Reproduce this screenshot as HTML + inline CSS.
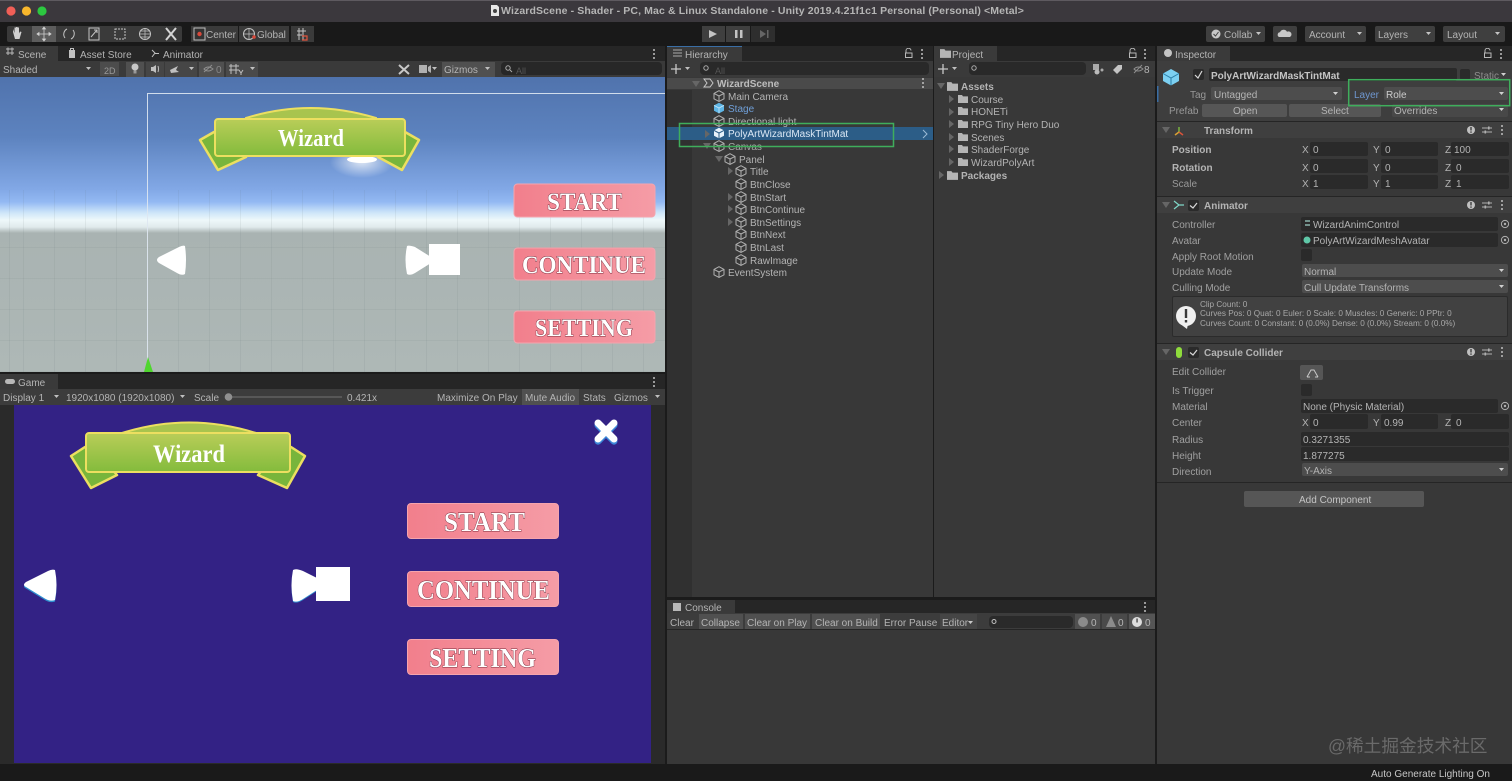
<!DOCTYPE html>
<html><head><meta charset="utf-8"><title>Unity</title>
<style>
html,body{margin:0;padding:0;width:1512px;height:781px;overflow:hidden;background:#383838}
body{position:relative;font-family:"Liberation Sans","Noto Sans CJK SC",sans-serif;font-size:10px;color:#b4b4b4;filter:blur(.3px)}
.b{position:absolute}
.t{position:absolute;line-height:12px;white-space:nowrap;margin-top:4px}
.f{position:absolute;background:#2a2a2a;border-radius:2px}
.d{position:absolute;background:#4d4d4d;border-radius:2px}
.h{position:absolute;background:#3f3f3f;left:1157px;width:355px;height:16px;border-top:1px solid #252525}
.bold{font-weight:bold}
svg{position:absolute;left:0;top:0}
</style></head>
<body>
<!-- title bar -->
<div class="b" style="left:0;top:0;width:1512px;height:22px;background:#3b383d;border-top:1px solid #5e5a60;box-sizing:border-box"></div>
<div class="b" style="left:0;top:22px;width:1512px;height:24px;background:#191919"></div>
<div class="t bold" style="left:501px;top:1px;font-size:10.5px;color:#b5b5b5;letter-spacing:.12px">WizardScene - Shader - PC, Mac &amp; Linux Standalone - Unity 2019.4.21f1c1 Personal (Personal) &lt;Metal&gt;</div>

<!-- toolbar buttons -->
<div class="b" style="left:7px;top:26px;width:175px;height:16px;background:#3a3a3a;border-radius:2px"></div>
<div class="b" style="left:32px;top:26px;width:24px;height:16px;background:#5c5c5c"></div>
<div class="b" style="left:191px;top:26px;width:47px;height:16px;background:#3a3a3a"></div>
<div class="b" style="left:239px;top:26px;width:50px;height:16px;background:#3a3a3a"></div>
<div class="b" style="left:291px;top:26px;width:23px;height:16px;background:#3a3a3a"></div>
<div class="t" style="left:206px;top:26px">Center</div>
<div class="t" style="left:257px;top:26px">Global</div>
<div class="b" style="left:702px;top:26px;width:23px;height:16px;background:#3f3f3f"></div>
<div class="b" style="left:726px;top:26px;width:24px;height:16px;background:#3f3f3f"></div>
<div class="b" style="left:751px;top:26px;width:24px;height:16px;background:#2e2e2e"></div>
<div class="b" style="left:1206px;top:26px;width:59px;height:16px;background:#3f3f3f;border-radius:2px"></div>
<div class="b" style="left:1273px;top:26px;width:24px;height:16px;background:#3f3f3f;border-radius:2px"></div>
<div class="b" style="left:1305px;top:26px;width:61px;height:16px;background:#3f3f3f;border-radius:2px"></div>
<div class="b" style="left:1375px;top:26px;width:60px;height:16px;background:#3f3f3f;border-radius:2px"></div>
<div class="b" style="left:1443px;top:26px;width:62px;height:16px;background:#3f3f3f;border-radius:2px"></div>
<div class="t" style="left:1224px;top:26px">Collab</div>
<div class="t" style="left:1309px;top:26px">Account</div>
<div class="t" style="left:1378px;top:26px">Layers</div>
<div class="t" style="left:1447px;top:26px">Layout</div>

<!-- tab strips -->
<div class="b" style="left:0;top:46px;width:665px;height:15px;background:#262626"></div>
<div class="b" style="left:0;top:46px;width:58px;height:15px;background:#3a3a3a"></div>
<div class="b" style="left:0;top:61px;width:665px;height:16px;background:#3a3a3a"></div>
<div class="t" style="left:18px;top:46px">Scene</div>
<div class="t" style="left:80px;top:46px">Asset Store</div>
<div class="t" style="left:163px;top:46px">Animator</div>
<div class="t" style="left:3px;top:61px">Shaded</div>
<div class="b" style="left:100px;top:62px;width:19px;height:14px;background:#4c4c4c"></div>
<div class="t" style="left:104px;top:61px;font-size:9px;color:#999">2D</div>
<div class="b" style="left:126px;top:62px;width:18px;height:15px;background:#505050"></div>
<div class="b" style="left:146px;top:62px;width:18px;height:15px;background:#464646"></div>
<div class="b" style="left:165px;top:62px;width:32px;height:15px;background:#464646"></div>
<div class="b" style="left:199px;top:62px;width:25px;height:15px;background:#505050"></div>
<div class="b" style="left:226px;top:62px;width:32px;height:15px;background:#4a4a4a"></div>
<div class="t" style="left:216px;top:61px;color:#888">0</div>
<div class="b" style="left:442px;top:62px;width:53px;height:15px;background:#505050"></div>
<div class="t" style="left:444px;top:61px">Gizmos</div>
<div class="f" style="left:501px;top:62px;width:161px;height:13px;background:#272727;border-radius:4px"></div>
<div class="t" style="left:516px;top:61px;font-size:9px;color:#555">All</div>

<!-- scene view -->
<div class="b" style="left:0;top:77px;width:665px;height:295px;background:linear-gradient(#5073ad 0,#5d83bf 60px,#82a8e6 112px,#93b9f3 125px,#cfe6f9 136px,#eef8fa 143px,#e0eaec 150px,#a9b3b2 156px,#aeb8b6 295px)"></div>
<div class="b" style="left:0;top:190px;width:665px;height:182px;background:repeating-linear-gradient(90deg,rgba(90,105,105,.09) 0,rgba(90,105,105,.09) 1px,transparent 1px,transparent 31px);background-position:23px 0"></div>
<div class="b" style="left:0;top:240px;width:665px;height:132px;background:repeating-linear-gradient(0deg,rgba(90,105,105,.08) 0,rgba(90,105,105,.08) 1px,transparent 1px,transparent 31px)"></div>
<div class="b" style="left:665px;top:46px;width:2px;height:718px;background:#1b1b1b"></div>
<div class="b" style="left:0;top:372px;width:665px;height:2px;background:#1b1b1b"></div>

<!-- game panel -->
<div class="b" style="left:0;top:374px;width:665px;height:15px;background:#262626"></div>
<div class="b" style="left:0;top:374px;width:58px;height:15px;background:#3a3a3a"></div>
<div class="b" style="left:0;top:389px;width:665px;height:16px;background:#3c3c3c"></div>
<div class="t" style="left:18px;top:374px">Game</div>
<div class="t" style="left:3px;top:389px">Display 1</div>
<div class="t" style="left:66px;top:389px">1920x1080 (1920x1080)</div>
<div class="t" style="left:194px;top:389px">Scale</div>
<div class="t" style="left:347px;top:389px">0.421x</div>
<div class="t" style="left:437px;top:389px">Maximize On Play</div>
<div class="b" style="left:522px;top:389px;width:57px;height:16px;background:#505050"></div>
<div class="t" style="left:525px;top:389px">Mute Audio</div>
<div class="t" style="left:583px;top:389px">Stats</div>
<div class="t" style="left:614px;top:389px">Gizmos</div>
<div class="b" style="left:0;top:405px;width:665px;height:359px;background:#2a2a2a"></div>
<div class="b" style="left:14px;top:405px;width:637px;height:358px;background:#332285"></div>

<!-- hierarchy -->
<div class="b" style="left:667px;top:46px;width:266px;height:15px;background:#262626"></div>
<div class="b" style="left:667px;top:46px;width:75px;height:15px;background:#3a3a3a;border-top:1px solid #3a6ea5;box-sizing:border-box"></div>
<div class="b" style="left:667px;top:61px;width:266px;height:16px;background:#3a3a3a"></div>
<div class="f" style="left:700px;top:62px;width:229px;height:13px;background:#292929;border-radius:4px"></div>
<div class="t" style="left:715px;top:61px;font-size:9px;color:#555">All</div>
<div class="t" style="left:685px;top:46px">Hierarchy</div>
<div class="b" style="left:667px;top:77px;width:266px;height:520px;background:#383838"></div>
<div class="b" style="left:667px;top:90px;width:25px;height:507px;background:#303030"></div>
<div class="b" style="left:667px;top:78px;width:266px;height:11px;background:#4a4a4a"></div>
<div class="t bold" style="left:717px;top:75px;color:#bdbdbd">WizardScene</div>
<div class="t" style="left:728px;top:88px">Main Camera</div>
<div class="t" style="left:728px;top:100px;color:#6f9fd8">Stage</div>
<div class="t" style="left:728px;top:113px">Directional light</div>
<div class="b" style="left:667px;top:127px;width:266px;height:13px;background:#2c5d87"></div>
<div class="t" style="left:728px;top:125px;color:#dbe8f5">PolyArtWizardMaskTintMat</div>
<div class="t" style="left:728px;top:138px;color:#a8a8a8">Canvas</div>
<div class="t" style="left:739px;top:151px">Panel</div>
<div class="t" style="left:750px;top:163px">Title</div>
<div class="t" style="left:750px;top:176px">BtnClose</div>
<div class="t" style="left:750px;top:189px">BtnStart</div>
<div class="t" style="left:750px;top:201px">BtnContinue</div>
<div class="t" style="left:750px;top:214px">BtnSettings</div>
<div class="t" style="left:750px;top:226px">BtnNext</div>
<div class="t" style="left:750px;top:239px">BtnLast</div>
<div class="t" style="left:750px;top:252px">RawImage</div>
<div class="t" style="left:728px;top:264px">EventSystem</div>

<!-- project -->
<div class="b" style="left:933px;top:46px;width:1px;height:551px;background:#1b1b1b"></div>
<div class="b" style="left:934px;top:46px;width:221px;height:15px;background:#262626"></div>
<div class="b" style="left:934px;top:46px;width:63px;height:15px;background:#3a3a3a"></div>
<div class="b" style="left:934px;top:61px;width:221px;height:16px;background:#3a3a3a"></div>
<div class="f" style="left:969px;top:62px;width:117px;height:13px;background:#292929;border-radius:4px"></div>
<div class="t" style="left:952px;top:46px">Project</div>
<div class="t" style="left:1144px;top:61px">8</div>
<div class="t bold" style="left:961px;top:78px">Assets</div>
<div class="t" style="left:971px;top:91px">Course</div>
<div class="t" style="left:971px;top:103px">HONETi</div>
<div class="t" style="left:971px;top:116px">RPG Tiny Hero Duo</div>
<div class="t" style="left:971px;top:129px">Scenes</div>
<div class="t" style="left:971px;top:141px">ShaderForge</div>
<div class="t" style="left:971px;top:154px">WizardPolyArt</div>
<div class="t bold" style="left:961px;top:167px">Packages</div>

<!-- console -->
<div class="b" style="left:667px;top:597px;width:488px;height:3px;background:#1b1b1b"></div>
<div class="b" style="left:667px;top:600px;width:488px;height:13px;background:#262626"></div>
<div class="b" style="left:667px;top:600px;width:68px;height:13px;background:#3a3a3a"></div>
<div class="b" style="left:667px;top:613px;width:488px;height:17px;background:#3c3c3c;border-bottom:1px solid #252525;box-sizing:border-box"></div>
<div class="b" style="left:699px;top:614px;width:44px;height:15px;background:#505050"></div>
<div class="b" style="left:745px;top:614px;width:65px;height:15px;background:#505050"></div>
<div class="b" style="left:812px;top:614px;width:68px;height:15px;background:#505050"></div>
<div class="b" style="left:940px;top:614px;width:37px;height:15px;background:#454545"></div>
<div class="f" style="left:989px;top:616px;width:84px;height:12px;border-radius:4px"></div>
<div class="b" style="left:1075px;top:614px;width:25px;height:15px;background:#505050"></div>
<div class="b" style="left:1102px;top:614px;width:25px;height:15px;background:#4a4a4a"></div>
<div class="b" style="left:1129px;top:614px;width:26px;height:15px;background:#555"></div>
<div class="t" style="left:685px;top:599px">Console</div>
<div class="t" style="left:670px;top:614px">Clear</div>
<div class="t" style="left:701px;top:614px">Collapse</div>
<div class="t" style="left:747px;top:614px">Clear on Play</div>
<div class="t" style="left:815px;top:614px">Clear on Build</div>
<div class="t" style="left:884px;top:614px">Error Pause</div>
<div class="t" style="left:942px;top:614px">Editor</div>
<div class="t" style="left:1091px;top:614px">0</div>
<div class="t" style="left:1118px;top:614px">0</div>
<div class="t" style="left:1145px;top:614px">0</div>

<!-- inspector -->
<div class="b" style="left:1155px;top:46px;width:2px;height:718px;background:#1b1b1b"></div>
<div class="b" style="left:1157px;top:46px;width:355px;height:15px;background:#262626"></div>
<div class="b" style="left:1157px;top:46px;width:73px;height:15px;background:#3a3a3a"></div>
<div class="t" style="left:1175px;top:46px">Inspector</div>
<div class="b" style="left:1157px;top:61px;width:355px;height:60px;background:#3e3e3e"></div>
<div class="f" style="left:1193px;top:69px;width:11px;height:11px"></div>
<div class="f" style="left:1209px;top:68px;width:248px;height:13px"></div>
<div class="t bold" style="left:1211px;top:67px;color:#c4c4c4">PolyArtWizardMaskTintMat</div>
<div class="f" style="left:1460px;top:69px;width:10px;height:11px"></div>
<div class="t" style="left:1474px;top:67px;color:#8d8d8d">Static</div>
<div class="t" style="left:1190px;top:86px;color:#999">Tag</div>
<div class="d" style="left:1211px;top:87px;width:131px;height:13px"></div>
<div class="t" style="left:1214px;top:86px">Untagged</div>
<div class="t" style="left:1354px;top:86px;color:#6f97d0">Layer</div>
<div class="d" style="left:1384px;top:87px;width:124px;height:13px"></div>
<div class="t" style="left:1386px;top:86px;color:#ccc">Role</div>
<div class="t" style="left:1169px;top:102px;color:#999">Prefab</div>
<div class="d" style="left:1202px;top:104px;width:85px;height:13px;background:#565656"></div>
<div class="d" style="left:1289px;top:104px;width:92px;height:13px;background:#565656"></div>
<div class="d" style="left:1392px;top:104px;width:116px;height:13px;background:#484848"></div>
<div class="t" style="left:1233px;top:102px">Open</div>
<div class="t" style="left:1321px;top:102px">Select</div>
<div class="t" style="left:1394px;top:102px">Overrides</div>

<div class="h" style="top:121px"></div>
<div class="t bold" style="left:1204px;top:122px">Transform</div>
<div class="t bold" style="left:1172px;top:141px">Position</div>
<div class="t bold" style="left:1172px;top:159px">Rotation</div>
<div class="t" style="left:1172px;top:175px;color:#999">Scale</div>
<div class="f" style="left:1310px;top:142px;width:58px;height:14px"></div>
<div class="f" style="left:1381px;top:142px;width:57px;height:14px"></div>
<div class="f" style="left:1451px;top:142px;width:58px;height:14px"></div>
<div class="f" style="left:1310px;top:159px;width:58px;height:14px"></div>
<div class="f" style="left:1381px;top:159px;width:57px;height:14px"></div>
<div class="f" style="left:1451px;top:159px;width:58px;height:14px"></div>
<div class="f" style="left:1310px;top:175px;width:58px;height:14px"></div>
<div class="f" style="left:1381px;top:175px;width:57px;height:14px"></div>
<div class="f" style="left:1451px;top:175px;width:58px;height:14px"></div>
<div class="t" style="left:1302px;top:141px">X</div><div class="t" style="left:1313px;top:141px">0</div>
<div class="t" style="left:1373px;top:141px">Y</div><div class="t" style="left:1385px;top:141px">0</div>
<div class="t" style="left:1445px;top:141px">Z</div><div class="t" style="left:1454px;top:141px">100</div>
<div class="t" style="left:1302px;top:159px">X</div><div class="t" style="left:1313px;top:159px">0</div>
<div class="t" style="left:1373px;top:159px">Y</div><div class="t" style="left:1385px;top:159px">0</div>
<div class="t" style="left:1445px;top:159px">Z</div><div class="t" style="left:1456px;top:159px">0</div>
<div class="t" style="left:1302px;top:175px">X</div><div class="t" style="left:1313px;top:175px">1</div>
<div class="t" style="left:1373px;top:175px">Y</div><div class="t" style="left:1385px;top:175px">1</div>
<div class="t" style="left:1445px;top:175px">Z</div><div class="t" style="left:1456px;top:175px">1</div>

<div class="h" style="top:196px"></div>
<div class="f" style="left:1188px;top:200px;width:11px;height:11px"></div>
<div class="t bold" style="left:1204px;top:197px">Animator</div>
<div class="t" style="left:1172px;top:216px;color:#a0a0a0">Controller</div>
<div class="t" style="left:1172px;top:232px;color:#a0a0a0">Avatar</div>
<div class="t" style="left:1172px;top:248px;color:#a0a0a0">Apply Root Motion</div>
<div class="t" style="left:1172px;top:263px;color:#a0a0a0">Update Mode</div>
<div class="t" style="left:1172px;top:279px;color:#a0a0a0">Culling Mode</div>
<div class="f" style="left:1301px;top:217px;width:197px;height:14px"></div>
<div class="f" style="left:1301px;top:233px;width:197px;height:14px"></div>
<div class="t" style="left:1313px;top:216px">WizardAnimControl</div>
<div class="t" style="left:1313px;top:232px">PolyArtWizardMeshAvatar</div>
<div class="f" style="left:1301px;top:249px;width:11px;height:12px"></div>
<div class="d" style="left:1302px;top:264px;width:206px;height:13px"></div>
<div class="d" style="left:1302px;top:280px;width:206px;height:13px"></div>
<div class="t" style="left:1304px;top:263px">Normal</div>
<div class="t" style="left:1304px;top:279px">Cull Update Transforms</div>
<div class="b" style="left:1172px;top:296px;width:336px;height:41px;background:#414141;border:1px solid #2b2b2b;box-sizing:border-box;border-radius:2px"></div>
<div class="t" style="left:1200px;top:295px;font-size:8.2px;color:#a8a8a8">Clip Count: 0</div>
<div class="t" style="left:1200px;top:304px;font-size:8.2px;color:#a8a8a8">Curves Pos: 0 Quat: 0 Euler: 0 Scale: 0 Muscles: 0 Generic: 0 PPtr: 0</div>
<div class="t" style="left:1200px;top:314px;font-size:8.2px;color:#a8a8a8">Curves Count: 0 Constant: 0 (0.0%) Dense: 0 (0.0%) Stream: 0 (0.0%)</div>

<div class="h" style="top:343px"></div>
<div class="f" style="left:1188px;top:347px;width:11px;height:11px"></div>
<div class="t bold" style="left:1204px;top:344px">Capsule Collider</div>
<div class="t" style="left:1172px;top:363px;color:#a0a0a0">Edit Collider</div>
<div class="d" style="left:1300px;top:365px;width:23px;height:15px;background:#565656"></div>
<div class="t" style="left:1172px;top:382px;color:#a0a0a0">Is Trigger</div>
<div class="f" style="left:1301px;top:384px;width:11px;height:12px"></div>
<div class="t" style="left:1172px;top:398px;color:#a0a0a0">Material</div>
<div class="f" style="left:1301px;top:399px;width:197px;height:14px"></div>
<div class="t" style="left:1303px;top:398px">None (Physic Material)</div>
<div class="t" style="left:1172px;top:414px;color:#a0a0a0">Center</div>
<div class="f" style="left:1310px;top:414px;width:58px;height:15px"></div>
<div class="f" style="left:1381px;top:414px;width:57px;height:15px"></div>
<div class="f" style="left:1451px;top:414px;width:58px;height:15px"></div>
<div class="t" style="left:1302px;top:414px">X</div><div class="t" style="left:1313px;top:414px">0</div>
<div class="t" style="left:1373px;top:414px">Y</div><div class="t" style="left:1384px;top:414px">0.99</div>
<div class="t" style="left:1445px;top:414px">Z</div><div class="t" style="left:1456px;top:414px">0</div>
<div class="t" style="left:1172px;top:431px;color:#a0a0a0">Radius</div>
<div class="f" style="left:1301px;top:432px;width:208px;height:14px"></div>
<div class="t" style="left:1303px;top:431px">0.3271355</div>
<div class="t" style="left:1172px;top:447px;color:#a0a0a0">Height</div>
<div class="f" style="left:1301px;top:447px;width:208px;height:14px"></div>
<div class="t" style="left:1303px;top:447px">1.877275</div>
<div class="t" style="left:1172px;top:463px;color:#a0a0a0">Direction</div>
<div class="d" style="left:1302px;top:463px;width:206px;height:13px"></div>
<div class="t" style="left:1304px;top:462px">Y-Axis</div>
<div class="b" style="left:1157px;top:482px;width:355px;height:1px;background:#252525"></div>
<div class="d" style="left:1244px;top:491px;width:180px;height:16px;background:#565656"></div>
<div class="t" style="left:1299px;top:491px;color:#c4c4c4">Add Component</div>

<!-- status -->
<div class="b" style="left:0;top:764px;width:1512px;height:17px;background:#1a1a1a"></div>
<div class="t" style="left:1371px;top:765px;color:#c8c8c8">Auto Generate Lighting On</div>
<div class="t" style="left:1328px;top:731px;font-size:17.7px;line-height:23px;color:#6a6a6a">@稀土掘金技术社区</div>

<!-- overlay: graphics and icons -->
<svg width="1512" height="781" viewBox="0 0 1512 781">
<defs>
<symbol id="c" viewBox="0 0 12 12"><path d="M6 .7 11 3.4V8.8L6 11.4 1 8.8V3.4ZM1 3.4 6 6 11 3.4M6 6V11.4" fill="none" stroke="#b0b0b0" stroke-width="1"/></symbol>
<symbol id="w" viewBox="0 0 12 12"><path d="M6 .7 11 3.4V8.8L6 11.4 1 8.8V3.4Z" fill="#e8f2fa"/><path d="M1 3.4 6 6 11 3.4M6 6V11.4" fill="none" stroke="#2c5d87"/></symbol>
<symbol id="fo" viewBox="0 0 10 10"><path d="M0 1H4L5 2.4H10V9H0Z" fill="#b5b5b5"/></symbol>
<symbol id="ke" viewBox="0 0 4 12"><circle cx="2" cy="2" r="1" fill="#c0c0c0"/><circle cx="2" cy="6" r="1" fill="#c0c0c0"/><circle cx="2" cy="10" r="1" fill="#c0c0c0"/></symbol>
<symbol id="lk" viewBox="0 0 10 10"><path d="M2 5V3A2.5 2.5 0 0 1 7 2.5M1.5 5H8V9.5H1.5Z" fill="none" stroke="#b8b8b8"/></symbol>
<symbol id="tg" viewBox="0 0 12 12"><circle cx="6" cy="6" r="3.6" fill="none" stroke="#b0b0b0"/><circle cx="6" cy="6" r="1.2" fill="#b0b0b0"/></symbol>
<symbol id="hp" viewBox="0 0 12 12"><circle cx="6" cy="6" r="4" fill="#c0c0c0"/><rect x="5.3" y="3" width="1.4" height="3.5" fill="#3f3f3f"/><rect x="5.3" y="7.4" width="1.4" height="1.4" fill="#3f3f3f"/></symbol>
<symbol id="sl" viewBox="0 0 12 12"><path d="M1 4H11M1 8H11" stroke="#b0b0b0"/><rect x="7" y="2.5" width="1.6" height="3" fill="#b0b0b0"/><rect x="3.5" y="6.5" width="1.6" height="3" fill="#b0b0b0"/></symbol>
<linearGradient id="g" x1="0" y1="0" x2="0" y2="1"><stop offset="0" stop-color="#b9cd58"/><stop offset="1" stop-color="#83bb3c"/></linearGradient>
<linearGradient id="p" x1="0" y1="0" x2="1" y2="0"><stop offset="0" stop-color="#f27f8c"/><stop offset="1" stop-color="#f59ca6"/></linearGradient>
<radialGradient id="gl"><stop offset="0" stop-color="#fff" stop-opacity=".75"/><stop offset="1" stop-color="#fff" stop-opacity="0"/></radialGradient>
</defs>

<!-- traffic lights -->
<circle cx="11" cy="11" r="4.6" fill="#f15f57"/><circle cx="26.5" cy="11" r="4.6" fill="#f8b62c"/><circle cx="42" cy="11" r="4.6" fill="#2cc840"/>
<path d="M491 5H497L499 7V16H491Z" fill="#e8e8e8"/><circle cx="495" cy="11" r="2" fill="#444"/>

<!-- tool icons -->
<path d="M15 39 13 32V29L14.5 33V27.5H16V33V27H17.5V33V27.500H19V33.500L20 31.500 21.500 32 19.500 39Z" fill="#d0d0d0"/>
<path d="M44 28V40M38 34H50M44 27 42.500 29H45.500ZM44 41 42.500 39H45.500ZM37 34 39 32.500V35.500ZM51 34 49 32.500V35.500Z" stroke="#d0d0d0" fill="#d0d0d0" stroke-width=".8"/>
<path d="M67 29A6 6 0 0 0 65 38M71 39A6 6 0 0 0 73 30" fill="none" stroke="#c4c4c4"/>
<rect x="89" y="28" width="10" height="12" fill="none" stroke="#c4c4c4"/><path d="M91 37 97 30M94 30H97V33" fill="none" stroke="#c4c4c4"/>
<rect x="115" y="29" width="10" height="10" fill="none" stroke="#c4c4c4" stroke-dasharray="2 1"/>
<circle cx="145" cy="34" r="5.500" fill="none" stroke="#c4c4c4"/><path d="M139.500 34H150.500M145 28.500V39.500M141 31H149M141 37H149" stroke="#c4c4c4" stroke-width=".7"/>
<path d="M166 28 176 40M176 28 166 40" stroke="#d5d5d5" stroke-width="2"/>
<rect x="194" y="28" width="11" height="12" fill="#333" stroke="#bdbdbd"/><circle cx="199.500" cy="34" r="2.200" fill="#d8483a"/>
<circle cx="249" cy="34" r="5.500" fill="none" stroke="#c4c4c4"/><path d="M243.500 34H254.500M249 28.500V39.500" stroke="#c4c4c4" stroke-width=".7"/><circle cx="254" cy="37" r="1.800" fill="#d8483a"/>
<path d="M299 28V40M303 28V40M297 31H306M297 35H302" stroke="#c4c4c4" stroke-width="1"/><path d="M302 36H307V40H302" fill="none" stroke="#e0553f" stroke-width="1.200"/>
<!-- play -->
<path d="M709 30 717 34 709 38Z" fill="#c4c4c4"/>
<rect x="735" y="30" width="2.500" height="8" fill="#c4c4c4"/><rect x="740" y="30" width="2.500" height="8" fill="#c4c4c4"/>
<path d="M760 30 766 34 760 38Z M767 30H768.500V38H767Z" fill="#666"/>
<!-- collab etc -->
<circle cx="1216" cy="34" r="4.500" fill="#c8c8c8"/><path d="M1213.500 34 1215.500 36 1218.500 32" fill="none" stroke="#444"/>
<path d="M1256 32H1261L1258.500 35Z M1357 32H1362L1359.500 35Z M1426 32H1431L1428.500 35Z M1495 32H1500L1497.500 35Z" fill="#c4c4c4"/>
<path d="M1279 37A2.500 2.500 0 0 1 1280 32.300A3.800 3.800 0 0 1 1287 31.800A2.800 2.800 0 0 1 1290 37Z" fill="#c8c8c8"/>

<!-- scene toolbar -->
<path d="M6 49H14M6 53H14M8 47.500V55M12 47.500V55" stroke="#b8b8b8"/>
<path d="M69 50H75V58H69Z" fill="#c0c0c0"/><path d="M70.500 50V48.500H73.500V50" fill="none" stroke="#c0c0c0"/>
<path d="M152 50 155 53 152 57M155 53.500H159" fill="none" stroke="#c0c0c0"/>
<use href="#ke" x="652" y="48" width="4" height="12"/>
<path d="M86 67H91L88.500 70Z M189 67H194L191.500 70Z M250 67H255L252.500 70Z M432 67H437L434.500 70Z M485 67H490L487.500 70Z" fill="#c0c0c0"/>
<circle cx="135" cy="67" r="3.500" fill="#c8c8c8"/><rect x="133.500" y="70.500" width="3" height="3" fill="#999"/>
<path d="M151 67V71H153L156 73V65L153 67Z" fill="#c0c0c0"/><path d="M158 66Q159 69 158 72" fill="none" stroke="#c0c0c0"/>
<path d="M170 70 178 66 176 70 179 72 171 73Z" fill="#c0c0c0"/>
<path d="M204 72 212 65M204 69Q208 65 213 69Q208 73 204 69Z" fill="none" stroke="#8f8f8f"/>
<path d="M231 64V74M236 64V74M229 66H239M229 70H239" stroke="#c0c0c0"/><path d="M239 70 241 73 243 70M241 73V75" fill="none" stroke="#c0c0c0"/>
<path d="M399 65 409 74M409 65 399 74" stroke="#c8c8c8" stroke-width="2"/>
<rect x="419" y="65" width="8" height="8" fill="#b0b0b0"/><path d="M428 67 431 65V73L428 71Z" fill="#b0b0b0"/>
<circle cx="508" cy="68" r="2.200" fill="none" stroke="#aaa"/><path d="M510 70 512 72" stroke="#aaa"/>

<!-- scene content -->
<path d="M147.500 372V93.500H665" fill="none" stroke="#dfe8f2" stroke-width="1" opacity=".9"/>
<ellipse cx="362" cy="162" rx="32" ry="16" fill="url(#gl)"/><ellipse cx="362" cy="159.500" rx="15" ry="3.500" fill="#fff"/>
<path d="M246 118Q310 98 376 118V130H246Z" fill="#a8c44e" stroke="#ecdf60" stroke-width="2"/>
<path d="M214 132 200 140 218 170 246 157 230 140Z" fill="#78b53b" stroke="#ecdf60" stroke-width="2.500" stroke-linejoin="round"/>
<path d="M405 132 419 140 402 170 378 157 390 140Z" fill="#78b53b" stroke="#ecdf60" stroke-width="2.500" stroke-linejoin="round"/>
<rect x="215" y="119" width="190" height="37" rx="3" fill="url(#g)" stroke="#ecdf60" stroke-width="2"/>
<text x="278" y="146" font-family="Liberation Serif" font-weight="bold" font-size="24" fill="#fff" textLength="66" lengthAdjust="spacingAndGlyphs">Wizard</text>

<g font-family="Liberation Serif" font-weight="bold" fill="#fff" stroke="#7a2c3c" stroke-width=".9" paint-order="stroke">
<rect x="514.500" y="184.500" width="140" height="32" rx="3" fill="url(#p)" stroke="#f5a4ad" stroke-width="2"/>
<rect x="514.500" y="248.500" width="140" height="31" rx="3" fill="url(#p)" stroke="#f5a4ad" stroke-width="2"/>
<rect x="514.500" y="311.500" width="140" height="31" rx="3" fill="url(#p)" stroke="#f5a4ad" stroke-width="2"/>
<text x="547" y="210" font-size="25" textLength="75" lengthAdjust="spacingAndGlyphs">START</text>
<text x="522" y="273" font-size="25" textLength="124" lengthAdjust="spacingAndGlyphs">CONTINUE</text>
<text x="535" y="336" font-size="25" textLength="98" lengthAdjust="spacingAndGlyphs">SETTING</text>
</g>
<path d="M185 246Q187 260 185 274Q182 276 177 273L159 263Q155 260 159 257L179 247Q183 245 185 246Z" fill="#fff"/>
<path d="M407 246Q404 260 407 274Q410 276 415 273L431 263V257L415 247Q409 245 407 246Z" fill="#fff"/>
<rect x="429" y="244" width="31" height="31" fill="#fff"/>
<path d="M148 357 153 372H144Z" fill="#4fd62e"/>

<!-- game tab -->
<rect x="5" y="379" width="10" height="5" rx="2.500" fill="#b8b8b8"/>
<use href="#ke" x="652" y="376" width="4" height="12"/>
<path d="M54 395H59L56.500 398Z M180 395H185L182.500 398Z M655 395H660L657.500 398Z" fill="#c0c0c0"/>
<path d="M228 397H342" stroke="#606060" stroke-width="1.500"/><circle cx="228.500" cy="397" r="3.800" fill="#8f8f8f"/>

<!-- game content -->
<path d="M122 433Q189 412 256 433V445H122Z" fill="#a8c44e" stroke="#ecdf60" stroke-width="2"/>
<path d="M85 447 71 456 91 488 117 475 100 455Z" fill="#78b53b" stroke="#ecdf60" stroke-width="2.500" stroke-linejoin="round"/>
<path d="M291 447 305 456 287 488 258 475 275 455Z" fill="#78b53b" stroke="#ecdf60" stroke-width="2.500" stroke-linejoin="round"/>
<rect x="86" y="433" width="204" height="39" rx="3" fill="url(#g)" stroke="#ecdf60" stroke-width="2"/>
<text x="153" y="462" font-family="Liberation Serif" font-weight="bold" font-size="25" fill="#fff" textLength="72" lengthAdjust="spacingAndGlyphs">Wizard</text>
<path d="M598 424 614 440M614 424 598 440" stroke="#3c87d8" stroke-width="7" stroke-linecap="round" transform="translate(0 1.200)"/>
<path d="M598 423 614 439M614 423 598 439" stroke="#fff" stroke-width="7" stroke-linecap="round"/>
<g font-family="Liberation Serif" font-weight="bold" fill="#fff" stroke="#7a2c3c" stroke-width=".9" paint-order="stroke">
<rect x="408" y="504" width="150" height="34" rx="3" fill="url(#p)" stroke="#f5a4ad" stroke-width="2"/>
<rect x="408" y="572" width="150" height="34" rx="3" fill="url(#p)" stroke="#f5a4ad" stroke-width="2"/>
<rect x="408" y="640" width="150" height="34" rx="3" fill="url(#p)" stroke="#f5a4ad" stroke-width="2"/>
<text x="444" y="531" font-size="27" textLength="81" lengthAdjust="spacingAndGlyphs">START</text>
<text x="417" y="599" font-size="27" textLength="133" lengthAdjust="spacingAndGlyphs">CONTINUE</text>
<text x="429" y="667" font-size="27" textLength="107" lengthAdjust="spacingAndGlyphs">SETTING</text>
</g>
<path d="M55 570Q58 585 55 600Q50 602 44 598L26 587Q22 585 26 582L48 571Q52 569 55 570Z" fill="#2f8fd0" transform="translate(0 1.500)"/>
<path d="M55 570Q58 585 55 600Q50 602 44 598L26 587Q22 585 26 582L48 571Q52 569 55 570Z" fill="#fff"/>
<path d="M293 570Q290 585 293 601Q297 603 303 599L317 590V578L303 571Q296 568 293 570Z" fill="#2f8fd0" transform="translate(0 1)"/>
<path d="M293 570Q290 585 293 601Q297 603 303 599L317 590V578L303 571Q296 568 293 570Z" fill="#fff"/>
<rect x="316" y="567" width="34" height="34" fill="#fff"/>

<!-- hierarchy icons -->
<path d="M676 64V74M671 69H681" stroke="#c8c8c8" stroke-width="1.300"/><path d="M685 67H690L687.500 70Z" fill="#c0c0c0"/>
<path d="M673 50H682M673 53H682M673 56H682" stroke="#aaa"/>
<circle cx="706" cy="68" r="2.200" fill="none" stroke="#aaa"/>
<use href="#lk" x="904" y="48" width="10" height="10"/><use href="#ke" x="920" y="48" width="4" height="12"/>
<use href="#ke" x="921" y="77" width="4" height="12"/>
<path d="M692 81H700L696 87Z M703 143H711L707 149Z M715 156H723L719 162Z" fill="#666"/>
<path d="M705 130V138L710 134Z M728 167V175L733 171Z M728 193V201L733 197Z M728 205V213L733 209Z M728 218V226L733 222Z" fill="#666"/>
<path d="M923 130 927 134 923 138" fill="none" stroke="#9dbbd6"/>
<path d="M704 79 710 79 713 83 710 87 704 87 707 83Z" fill="none" stroke="#c8c8c8"/>
<use href="#c" x="713" y="90" width="12" height="12"/>
<path d="M719 102.700 724 105.400V110.800L719 113.400 714 110.800V105.400Z" fill="#5fb6e6"/><path d="M714 105.400 719 108 724 105.400M719 108V113.400" fill="none" stroke="#c8e6f7" stroke-width=".8"/>
<use href="#c" x="713" y="115" width="12" height="12"/>
<use href="#w" x="713" y="127" width="12" height="12"/>
<use href="#c" x="713" y="140" width="12" height="12"/>
<use href="#c" x="724" y="153" width="12" height="12"/>
<use href="#c" x="735" y="165" width="12" height="12"/>
<use href="#c" x="735" y="178" width="12" height="12"/>
<use href="#c" x="735" y="191" width="12" height="12"/>
<use href="#c" x="735" y="203" width="12" height="12"/>
<use href="#c" x="735" y="216" width="12" height="12"/>
<use href="#c" x="735" y="228" width="12" height="12"/>
<use href="#c" x="735" y="241" width="12" height="12"/>
<use href="#c" x="735" y="254" width="12" height="12"/>
<use href="#c" x="713" y="266" width="12" height="12"/>
<rect x="679.500" y="123.500" width="214" height="23" fill="none" stroke="#3fae5c" stroke-width="1.500"/>

<!-- project icons -->
<use href="#fo" x="940" y="48" width="11" height="11"/>
<path d="M943 64V74M938 69H948" stroke="#c8c8c8" stroke-width="1.300"/><path d="M952 67H957L954.500 70Z" fill="#c0c0c0"/>
<circle cx="974" cy="68" r="2.200" fill="none" stroke="#aaa"/>
<use href="#lk" x="1128" y="48" width="10" height="10"/><use href="#ke" x="1143" y="48" width="4" height="12"/>
<path d="M1093 64H1099V70H1093Z" fill="#aaa"/><circle cx="1097" cy="72" r="2.500" fill="#bbb"/><circle cx="1102" cy="70" r="1.500" fill="#aaa"/>
<path d="M1113 70 1118 65H1122V69L1117 74Z" fill="#c4c4c4"/>
<path d="M1134 73 1142 65M1134 69Q1138 65 1143 69Q1138 73 1134 69Z" fill="none" stroke="#8f8f8f"/>
<path d="M937 83H945L941 89Z" fill="#666"/>
<use href="#fo" x="947" y="81" width="11" height="11"/>
<path d="M947 95V103L952 99Z M947 108V116L952 112Z M947 120V128L952 124Z M947 133V141L952 137Z M947 145V153L952 149Z M947 158V166L952 162Z M937 171V179L942 175Z" fill="#666" transform="translate(2 0)"/>
<use href="#fo" x="958" y="94" width="10" height="10"/>
<use href="#fo" x="958" y="106" width="10" height="10"/>
<use href="#fo" x="958" y="119" width="10" height="10"/>
<use href="#fo" x="958" y="132" width="10" height="10"/>
<use href="#fo" x="958" y="144" width="10" height="10"/>
<use href="#fo" x="958" y="157" width="10" height="10"/>
<use href="#fo" x="947" y="170" width="11" height="11"/>

<!-- console icons -->
<rect x="673" y="603" width="8" height="8" fill="#b8b8b8"/>
<use href="#ke" x="1143" y="601" width="4" height="12"/>
<path d="M968 621H973L970.500 624Z" fill="#c8c8c8"/>
<circle cx="994" cy="621.500" r="2" fill="none" stroke="#c0c0c0"/>
<circle cx="1083" cy="622" r="5" fill="#8b8b8b"/>
<path d="M1111 616 1116 627H1106Z" fill="#8b8b8b"/>
<circle cx="1137" cy="622" r="5" fill="#ddd"/><rect x="1136.300" y="618.500" width="1.500" height="4" fill="#555"/>

<!-- inspector icons -->
<circle cx="1168" cy="53" r="4" fill="#c4c4c4"/>
<use href="#lk" x="1483" y="48" width="10" height="10"/><use href="#ke" x="1499" y="48" width="4" height="12"/>
<path d="M1171 69 1179 73.500V81L1171 85.500 1163 81V73.500Z" fill="#7cd0f2"/><path d="M1163 73.500 1171 78 1179 73.500M1171 78V85.500" fill="none" stroke="#2a7ea8"/>
<rect x="1157" y="86" width="1.500" height="16" fill="#3a6ea5"/>
<path d="M1195 75 1198 78 1202 71" fill="none" stroke="#d8d8d8" stroke-width="1.200"/>
<rect x="1348.700" y="79.700" width="161" height="26" fill="none" stroke="#3fae5c" stroke-width="1.500"/>
<path d="M1333 92H1338L1335.500 95Z M1499 92H1504L1501.500 95Z M1499 108H1504L1501.500 111Z M1501 73H1506L1503.500 76Z" fill="#d0d0d0"/>
<path d="M1162 127H1170L1166 133Z M1162 202H1170L1166 208Z M1162 349H1170L1166 355Z" fill="#666"/>
<path d="M1179 127V132" stroke="#79b33e" stroke-width="1.500"/><path d="M1179 132 1175 135" stroke="#d9a133" stroke-width="1.500"/><path d="M1179 132 1183 135" stroke="#d9533a" stroke-width="1.500"/>
<use href="#hp" x="1465" y="124" width="12" height="12"/><use href="#sl" x="1481" y="124" width="12" height="12"/><use href="#ke" x="1500" y="124" width="4" height="12"/>
<use href="#hp" x="1465" y="199" width="12" height="12"/><use href="#sl" x="1481" y="199" width="12" height="12"/><use href="#ke" x="1500" y="199" width="4" height="12"/>
<use href="#hp" x="1465" y="346" width="12" height="12"/><use href="#sl" x="1481" y="346" width="12" height="12"/><use href="#ke" x="1500" y="346" width="4" height="12"/>
<path d="M1174 201 1179 205 1174 209M1179 205H1184" fill="none" stroke="#7fd8c8" stroke-width="1.200"/>
<path d="M1190 205.500 1193 208 1197 203" fill="none" stroke="#d8d8d8" stroke-width="1.200"/>
<path d="M1190 352.500 1193 355 1197 350" fill="none" stroke="#d8d8d8" stroke-width="1.200"/>
<rect x="1176" y="347" width="6" height="11" rx="3" fill="#8fdc3c"/>
<path d="M1305 221H1310M1305 225H1310" stroke="#9fd0c8" stroke-width="1.300"/>
<circle cx="1307" cy="240" r="3.500" fill="#5fc8a8"/>
<use href="#tg" x="1499" y="218" width="12" height="12"/><use href="#tg" x="1499" y="234" width="12" height="12"/><use href="#tg" x="1499" y="400" width="12" height="12"/>
<path d="M1499 269H1504L1501.500 272Z M1499 285H1504L1501.500 288Z M1499 468H1504L1501.500 471Z" fill="#d0d0d0"/>
<circle cx="1186" cy="316" r="10" fill="#f0f0f0"/><path d="M1179 323 1187 329 1188 324Z" fill="#f0f0f0"/><rect x="1184.800" y="309" width="2.400" height="9" fill="#3a3a3a"/><rect x="1184.800" y="320" width="2.400" height="2.500" fill="#3a3a3a"/>
<path d="M1307 377 1311 370H1314L1318 377M1307 377H1310M1315 377H1318" fill="none" stroke="#c8c8c8"/>
</svg>
</body></html>
